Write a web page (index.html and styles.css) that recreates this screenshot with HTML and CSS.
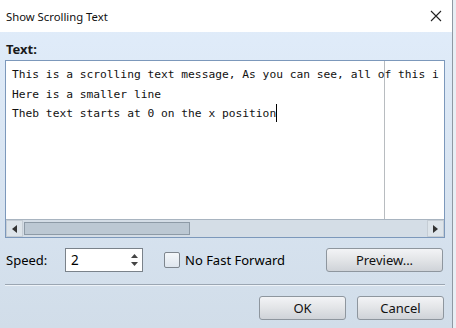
FILE: index.html
```html
<!DOCTYPE html>
<html lang="en">
<head>
  <meta charset="UTF-8" />
  <title>Show Scrolling Text</title>
  <link rel="stylesheet" href="styles.css">
</head>
<body>
  <div class="window">
    <div class="titlebar">
      <span class="title">Show Scrolling Text</span>
      <svg class="close" width="12" height="12" viewBox="0 0 12 12">
        <path d="M1 1 L11 11 M11 1 L1 11" stroke="#222" stroke-width="1.1" fill="none"/>
      </svg>
    </div>

    <div class="content">
      <div class="label">Text:</div>

      <div class="editor">
        <div class="editor-body">
          <div class="guide"></div>
          <div class="lines">
            <div class="line">This is a scrolling text message, As you can see, all of this i</div>
            <div class="line">Here is a smaller line</div>
            <div class="line">Theb text starts at 0 on the x position<span class="caret"></span></div>
          </div>
        </div>
        <div class="hscroll">
          <div class="arrow">
            <svg width="5" height="8" viewBox="0 0 5 8"><path d="M5 0 L0 4 L5 8 Z" fill="#333"/></svg>
          </div>
          <div class="track">
            <div class="thumb"></div>
          </div>
          <div class="arrow">
            <svg width="5" height="8" viewBox="0 0 5 8"><path d="M0 0 L5 4 L0 8 Z" fill="#333"/></svg>
          </div>
        </div>
      </div>

      <div class="options">
        <span class="speed-label">Speed:</span>
        <div class="spinbox">
          <span class="spin-value">2</span>
          <div class="spin-arrows">
            <svg width="7" height="4" viewBox="0 0 7 4"><path d="M0 4 L3.5 0 L7 4 Z" fill="#444"/></svg>
            <svg width="7" height="4" viewBox="0 0 7 4"><path d="M0 0 L3.5 4 L7 0 Z" fill="#444"/></svg>
          </div>
        </div>
        <label class="check">
          <span class="box"></span>
          No Fast Forward
        </label>
        <button class="btn preview-btn">Preview...</button>
      </div>

      <div class="separator"></div>

      <div class="actions">
        <button class="btn action-btn">OK</button>
        <button class="btn action-btn">Cancel</button>
      </div>
    </div>
  </div>
</body>
</html>
```

FILE: styles.css
```css
* {
  margin: 0;
  padding: 0;
  box-sizing: border-box;
}

body {
  width: 456px;
  height: 328px;
  overflow: hidden;
  background-color: #e8eef4;
  font-family: 'Noto Sans', 'Open Sans', sans-serif;
  font-size: 13px;
  color: #000;
}

.window {
  width: 453px;
  height: 328px;
  border-right: 1px solid #8f99a3;
  background: linear-gradient(#e1edfb, #d1dde9);
}

.titlebar {
  height: 32px;
  background-color: #ffffff;
  display: flex;
  align-items: center;
  justify-content: space-between;
  padding: 0 10px 0 6px;
}

.title {
  font-size: 11.3px;
  color: #111;
}

.content {
  padding: 8px 7px 0 5px;
}

.label {
  font-weight: bold;
  font-size: 13px;
  height: 20px;
  line-height: 18px;
  padding-left: 1px;
  color: #1a1a1a;
}

.editor {
  width: 440px;
  height: 178px;
  border: 1px solid #7c98bb;
  background-color: #ffffff;
  display: flex;
  flex-direction: column;
}

.editor-body {
  flex: 1;
  position: relative;
  overflow: hidden;
}

.guide {
  position: absolute;
  left: 378px;
  top: 0;
  bottom: 0;
  width: 1px;
  background-color: #b8bcc0;
}

.lines {
  position: relative;
  padding: 4px 0 0 6px;
  font-family: 'DejaVu Sans Mono', monospace;
  font-size: 11.25px;
  line-height: 19.5px;
  color: #111;
}

.line {
  white-space: pre;
}

.caret {
  display: inline-block;
  width: 1px;
  height: 18px;
  background-color: #000;
  vertical-align: -5px;
}

.hscroll {
  height: 18px;
  display: flex;
  background-color: #d4dde6;
  border-top: 1px solid #a8b4c0;
}

.arrow {
  width: 17px;
  display: flex;
  align-items: center;
  justify-content: center;
  background-color: #dde4ea;
  border: 1px solid #c5cdd5;
}

.track {
  flex: 1;
  padding: 2px 1px;
}

.thumb {
  width: 166px;
  height: 100%;
  background-color: #bcc8d3;
  border: 1px solid #8d9aa6;
}

.options {
  display: flex;
  align-items: center;
  height: 24px;
  margin-top: 10px;
}

.speed-label {
  width: 60px;
  padding-left: 1px;
}

.spinbox {
  width: 78px;
  height: 24px;
  background-color: #ffffff;
  border: 1px solid #7a828a;
  display: flex;
  align-items: center;
  justify-content: space-between;
  padding: 0 4px 0 5px;
}

.spin-value {
  font-size: 13.5px;
}

.spin-arrows {
  display: flex;
  flex-direction: column;
  gap: 4px;
}

.check {
  display: flex;
  align-items: center;
  gap: 5px;
  margin-left: 21px;
  width: 162px;
}

.box {
  width: 16px;
  height: 16px;
  border: 1px solid #7e868e;
  border-radius: 2px;
  background: linear-gradient(#f4f7fa, #dfe6ee);
}

.btn {
  font-family: 'Noto Sans', 'Open Sans', sans-serif;
  font-size: 13px;
  color: #111;
  height: 24px;
  border: 1px solid #8e969e;
  border-radius: 3px;
  background: linear-gradient(#f3f4f6 0%, #e2e4e7 50%, #cfd3d8 100%);
}

.preview-btn {
  width: 117px;
}

.separator {
  height: 2px;
  margin-top: 12px;
  border-top: 1px solid #9ba6b2;
  border-bottom: 1px solid #eef3f8;
}

.actions {
  display: flex;
  justify-content: flex-end;
  gap: 11px;
  margin-top: 10px;
  padding-right: 1px;
}

.action-btn {
  width: 87px;
}
```
